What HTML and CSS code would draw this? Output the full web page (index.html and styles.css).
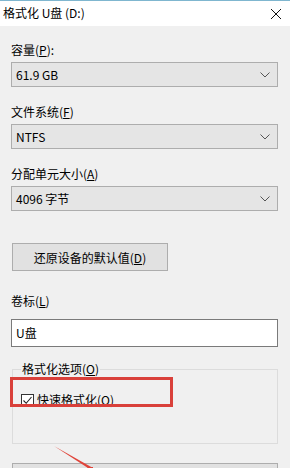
FILE: index.html
```html
<!DOCTYPE html>
<html lang="zh-CN">
<head>
    <meta charset="UTF-8">
    <meta name="viewport" content="width=device-width, initial-scale=1.0">
    <title>格式化 U盘 (D:)</title>
    <link rel="stylesheet" href="styles.css">
</head>
<body>
    <div class="dialog">
        <div class="titlebar">
            <span class="title">格式化 U盘 (D:)</span>
            <svg class="close" width="12" height="12" viewBox="0 0 12 12">
                <path d="M1 1 L11 11 M11 1 L1 11" stroke="#111" stroke-width="1" fill="none"/>
            </svg>
        </div>
        <div class="content">
            <div class="label">容量(<u>P</u>):</div>
            <div class="combo"><span>61.9 GB</span><svg class="chev" width="10" height="6" viewBox="0 0 10 6"><path d="M0.5 0.5 L5 5 L9.5 0.5" stroke="#555" fill="none"/></svg></div>

            <div class="label next">文件系统(<u>F</u>)</div>
            <div class="combo"><span>NTFS</span><svg class="chev" width="10" height="6" viewBox="0 0 10 6"><path d="M0.5 0.5 L5 5 L9.5 0.5" stroke="#555" fill="none"/></svg></div>

            <div class="label next">分配单元大小(<u>A</u>)</div>
            <div class="combo"><span>4096 字节</span><svg class="chev" width="10" height="6" viewBox="0 0 10 6"><path d="M0.5 0.5 L5 5 L9.5 0.5" stroke="#555" fill="none"/></svg></div>

            <button class="btn-default">还原设备的默认值(<u>D</u>)</button>

            <div class="label volume">卷标(<u>L</u>)</div>
            <div class="textbox">U盘</div>

            <fieldset class="group">
                <legend>格式化选项(<u>O</u>)</legend>
                <div class="check-row">
                    <span class="checkbox">
                        <svg width="11" height="11" viewBox="0 0 11 11"><path d="M1.5 5.5 L4.2 8.3 L9.5 2" stroke="#222" stroke-width="1.1" fill="none"/></svg>
                    </span>
                    <span>快速格式化(<u>Q</u>)</span>
                </div>
            </fieldset>

            <div class="btn-start"></div>

            <div class="highlight"></div>
            <svg class="arrow" width="60" height="30" viewBox="0 0 60 30">
                <polygon points="2,1 41,23 36,23" fill="#e0443a"/>
                <polygon points="36,22 41,22 41,30 30,30" fill="#e0443a"/>
            </svg>
        </div>
    </div>
</body>
</html>
```

FILE: styles.css
```css
body {
    margin: 0;
    background-color: #f0f0f0;
    font-family: "Noto Sans CJK SC", "Noto Sans", sans-serif;
    font-size: 12px;
    color: #000;
    overflow: hidden;
}

u {
    text-decoration: underline;
    text-underline-offset: 1px;
}

.dialog {
    width: 290px;
    height: 468px;
    overflow: hidden;
}

.titlebar {
    height: 25px;
    background-color: #fff;
    border-top: 1px solid #7fb6cf;
    display: flex;
    align-items: center;
    justify-content: space-between;
    padding: 0 8px 0 3px;
}

.title {
    font-size: 12px;
    line-height: 16px;
    margin-top: -1px;
}

.close {
    margin-top: 1px;
}

.content {
    position: relative;
    padding: 16px 12px 0 11px;
}

.label {
    line-height: 16px;
    height: 16px;
    margin-bottom: 4px;
}

.label.next {
    margin-top: 17px;
}

.combo {
    box-sizing: border-box;
    height: 25px;
    background-color: #e5e5e5;
    border: 1px solid #adadad;
    display: flex;
    align-items: center;
    justify-content: space-between;
    padding: 0 7px 0 4px;
    line-height: 16px;
}

.chev {
    margin-top: 1px;
}

.btn-default {
    display: block;
    box-sizing: border-box;
    margin: 32px 0 0 1px;
    width: 156px;
    height: 28px;
    background-color: #e1e1e1;
    border: 1px solid #adadad;
    font-family: inherit;
    font-size: 12px;
    color: #000;
    padding: 0;
}

.label.volume {
    margin-top: 22px;
    margin-bottom: 10px;
}

.textbox {
    box-sizing: border-box;
    height: 28px;
    background-color: #fff;
    border: 1px solid #7a7a7a;
    padding: 0 4px;
    line-height: 26px;
}

.group {
    margin: 14px 0 0 1px;
    padding: 0 8px;
    height: 83px;
    box-sizing: border-box;
    border: 1px solid #dcdcdc;
}

.group legend {
    padding: 0 1px;
    margin-left: 0;
    line-height: 16px;
}

.check-row {
    display: flex;
    align-items: center;
    gap: 3px;
    margin-top: 15px;
    line-height: 16px;
}

.checkbox {
    box-sizing: border-box;
    width: 13px;
    height: 13px;
    border: 1px solid #333;
    background-color: #fff;
    display: flex;
    align-items: center;
    justify-content: center;
}

.btn-start {
    margin: 19px 0 0 1px;
    height: 28px;
    box-sizing: border-box;
    background-color: #e1e1e1;
    border: 1px solid #adadad;
}

.highlight {
    position: absolute;
    left: 10px;
    top: 351px;
    width: 157px;
    height: 24px;
    border: 3px solid #d9403a;
}

.arrow {
    position: absolute;
    left: 52px;
    top: 419px;
}
```
